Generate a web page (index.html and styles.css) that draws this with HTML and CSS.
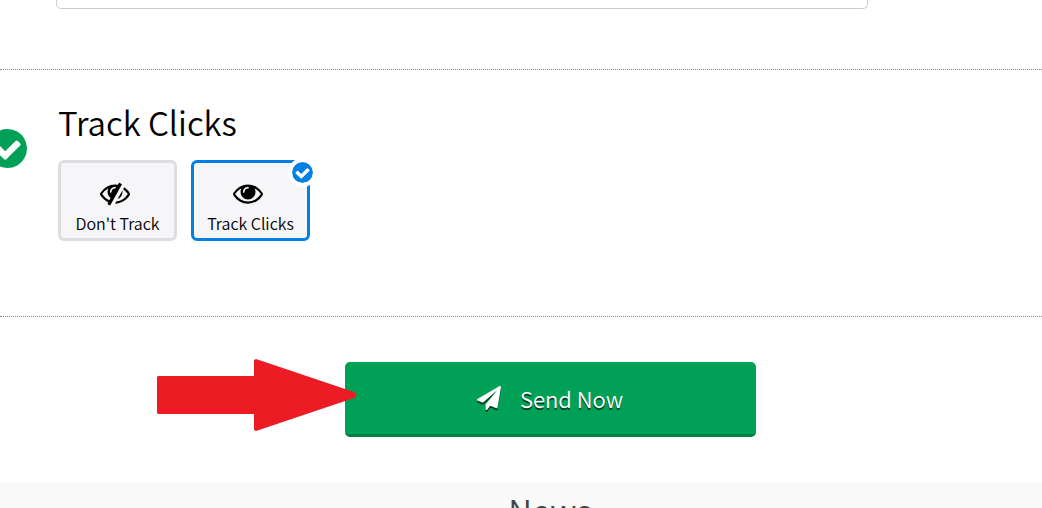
FILE: index.html
```html
<!DOCTYPE html>
<html lang="en">
<head>
    <meta charset="UTF-8">
    <meta name="viewport" content="width=device-width, initial-scale=1.0">
    <title>Send Campaign</title>
    <link rel="stylesheet" href="styles.css">
</head>
<body>
    <form action="#" method="post">
        <!-- Message -->
        <section class="step step-message">
            <textarea class="message-box" name="message" aria-label="Message"></textarea>
        </section>

        <!-- Click tracking -->
        <section class="step step-track">
            <svg class="step-done" viewBox="128 128 1536 1536" aria-hidden="true"><path d="M1412 734q0-28-18-46l-91-90q-19-19-45-19t-45 19l-408 407-226-226q-19-19-45-19t-45 19l-91 90q-18 18-18 46 0 27 18 45l362 362q19 19 45 19 27 0 46-19l543-543q18-18 18-45zm252 162q0 209-103 385.5t-279.5 279.5-385.5 103-385.5-103-279.5-279.5-103-385.5 103-385.5 279.5-279.5 385.5-103 385.5 103 279.5 279.5 103 385.5z"/></svg>
            <div class="step-content">
                <h2 class="step-title">Track Clicks</h2>
                <div class="options">
                    <label class="option">
                        <input type="radio" name="track" value="0">
                        <svg class="option-icon" viewBox="0 0 1792 1792" aria-hidden="true"><path d="M555 1335l78-141q-87-63-136-159t-49-203q0-121 61-225-229 117-381 353 167 258 427 375zm389-759q0-20-14-34t-34-14q-125 0-214.5 89.5t-89.5 214.5q0 20 14 34t34 14 34-14 14-34q0-86 61-147t147-61q20 0 34-14t14-34zm363-191q0 7-1 9-105 188-315 566t-316 567l-49 89q-10 16-28 16-12 0-134-70-16-10-16-28 0-12 44-87-143-65-263.5-173t-208.5-245q-20-31-20-69t20-69q153-235 380-371t496-136q89 0 180 17l54-97q10-16 28-16 5 0 18 6t31 15.5 33 18.5 31.5 18.5 19.5 11.5q16 10 16 27zm37 447q0 139-79 253.5t-209 164.5l280-502q8 45 8 84zm448 128q0 35-20 69-39 64-109 145-150 172-347.5 267t-419.5 95l74-132q212-18 392.5-137t301.5-307q-115-179-282-294l63-112q95 64 182.5 153t144.5 184q20 34 20 69z"/></svg>
                        <span class="option-text">Don't Track</span>
                    </label>
                    <label class="option">
                        <input type="radio" name="track" value="1" checked>
                        <svg class="option-icon" viewBox="0 0 1792 1792" aria-hidden="true"><path d="M1664 960q-152-236-381-353 61 104 61 225 0 185-131.5 316.5t-316.5 131.5-316.5-131.5-131.5-316.5q0-121 61-225-229 117-381 353 133 205 333.5 326.5t434.5 121.5 434.5-121.5 333.5-326.5zm-720-384q0-20-14-34t-34-14q-125 0-214.5 89.5t-89.5 214.5q0 20 14 34t34 14 34-14 14-34q0-86 61-147t147-61q20 0 34-14t14-34zm848 384q0 34-20 69-140 230-376.5 368.5t-499.5 138.5-499.5-139-376.5-368q-20-35-20-69t20-69q140-229 376.5-368t499.5-139 499.5 139 376.5 368q20 35 20 69z"/></svg>
                        <span class="option-text">Track Clicks</span>
                        <svg class="option-badge" viewBox="128 128 1536 1536" aria-hidden="true"><path d="M1412 734q0-28-18-46l-91-90q-19-19-45-19t-45 19l-408 407-226-226q-19-19-45-19t-45 19l-91 90q-18 18-18 46 0 27 18 45l362 362q19 19 45 19 27 0 46-19l543-543q18-18 18-45zm252 162q0 209-103 385.5t-279.5 279.5-385.5 103-385.5-103-279.5-279.5-103-385.5 103-385.5 279.5-279.5 385.5-103 385.5 103 279.5 279.5 103 385.5z"/></svg>
                    </label>
                </div>
            </div>
        </section>

        <!-- Send -->
        <div class="send-row">
            <button type="submit" class="btn-send">
                <svg class="send-icon" viewBox="0 0 1792 1792" aria-hidden="true"><path d="M1764 11q33 24 27 64l-256 1536q-5 29-32 45-14 8-31 8-11 0-24-5l-453-185-242 295q-18 23-49 23-13 0-22-4-19-7-30.5-23.5t-11.5-36.5v-349l864-1059-1069 925-395-162q-37-14-40-55-2-40 32-59l1664-960q15-9 32-9 20 0 36 11z"/></svg>
                <span>Send Now</span>
            </button>
            <svg class="arrow" viewBox="0 0 200 72" aria-hidden="true"><path d="M1 17H97V1L99 0L197 33Q202 36 197 39L99 72L97 71V55H1L0 54V18Z"/></svg>
        </div>
    </form>

    <footer class="footer">
        <h3 class="footer-title">News</h3>
    </footer>
</body>
</html>
```

FILE: styles.css
```css
* {
    box-sizing: border-box;
}
body {
    margin: 0;
    height: 100vh;
    overflow: hidden;
    background-color: #fff;
    color: #000;
    font-family: "Source Sans Pro", "Noto Sans CJK SC", sans-serif;
}
.step {
    border-bottom: 1px dotted #888;
}
.step-message {
    padding: 0 56px 60px;
}
.message-box {
    display: block;
    width: 100%;
    max-width: 812px;
    height: 9px;
    padding: 0;
    border: 1px solid #ccc;
    border-top: none;
    border-radius: 0 0 5px 5px;
    resize: none;
    overflow: hidden;
}
.step-track {
    display: flex;
    padding: 32px 0 75px;
}
.step-done {
    flex: none;
    width: 39px;
    height: 39px;
    margin: 27px 31px 0 -12px;
    fill: #00a156;
}
.step-title {
    margin: 0 0 18px;
    font-size: 33px;
    font-weight: 350;
    line-height: 40px;
}
.options {
    display: flex;
    gap: 14px;
}
.option {
    position: relative;
    display: flex;
    flex-direction: column;
    align-items: center;
    width: 119px;
    padding: 15px 0 0;
    border: 3px solid #dcdce2;
    border-radius: 6px;
    background-color: #f6f6f9;
    cursor: pointer;
}
.option:has(input:checked) {
    border-color: #0080e3;
}
.option input {
    position: absolute;
    opacity: 0;
}
.option-icon {
    width: 30px;
    height: 30px;
    margin-right: 5px;
}
.option-text {
    font-size: 16px;
    font-weight: 350;
    line-height: 30px;
}
.option-badge {
    position: absolute;
    top: -5px;
    right: -10px;
    width: 29px;
    height: 29px;
    padding: 4px;
    border-radius: 50%;
    background-color: #fff;
    fill: #0080e3;
}
.send-row {
    position: relative;
    display: flex;
    justify-content: center;
    padding: 45px 0 45px 58px;
}
.btn-send {
    display: flex;
    justify-content: center;
    align-items: center;
    gap: 19px;
    width: 411px;
    height: 75px;
    border: none;
    border-bottom: 3px solid #008045;
    border-radius: 5px;
    background-color: #00a156;
    color: #fff;
    font-family: inherit;
    font-size: 22px;
    font-weight: 350;
    text-shadow: 0 2px 0 #003d20;
    cursor: pointer;
}
.send-icon {
    width: 24px;
    height: 24px;
    fill: #fff;
    filter: drop-shadow(0 2px 0 #003d20);
}
/* Points at the send button */
.arrow {
    position: absolute;
    top: 42px;
    right: calc(50% + 164px);
    width: 200px;
    height: 72px;
    fill: #ed1c24;
}
.footer {
    padding: 8px 0 20px 58px;
    background-color: #f9f9f9;
    text-align: center;
}
.footer-title {
    margin: 0;
    color: #444;
    font-size: 33px;
    font-weight: 350;
    line-height: 40px;
}
```
